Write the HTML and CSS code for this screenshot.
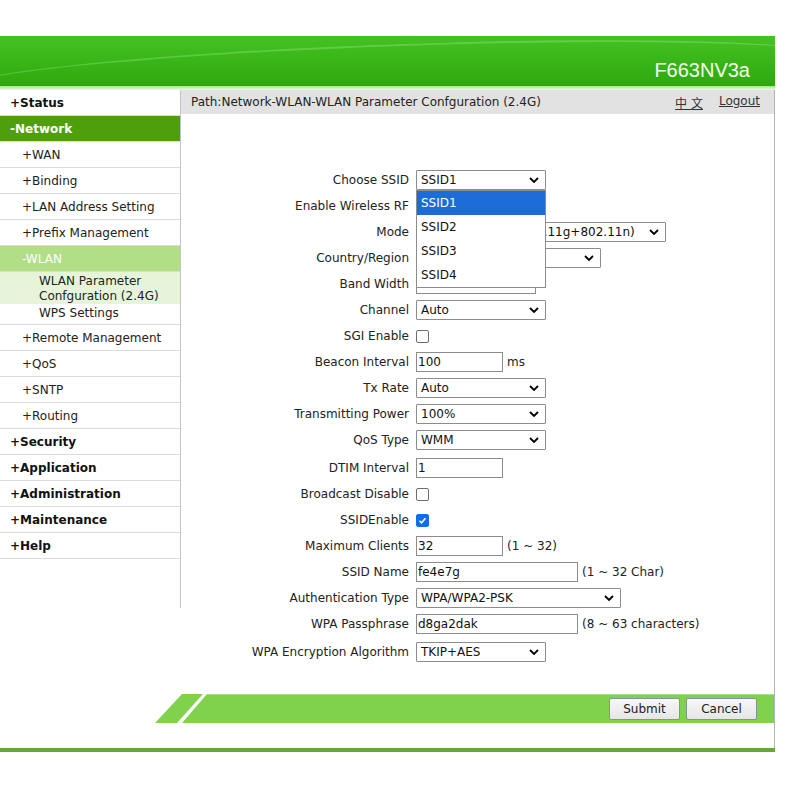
FILE: index.html
```html
<!DOCTYPE html>
<html>
<head>
<meta charset="utf-8">
<link rel="stylesheet" href="styles.css">
</head>
<body>
<div class="top"></div>
<header class="banner">
  <div class="swoosh"></div>
  <div class="model">F663NV3a</div>
</header>
<div class="banner-line"></div>
<div class="main">
  <nav class="side">
    <div class="item top-level">+Status</div>
    <div class="item top-level open">-Network</div>
    <div class="item sub">+WAN</div>
    <div class="item sub">+Binding</div>
    <div class="item sub">+LAN Address Setting</div>
    <div class="item sub">+Prefix Management</div>
    <div class="item sub active">-WLAN</div>
    <div class="subgroup">
      <div class="leaf current">WLAN Parameter<br>Confguration (2.4G)</div>
      <div class="leaf">WPS Settings</div>
    </div>
    <div class="item sub">+Remote Management</div>
    <div class="item sub">+QoS</div>
    <div class="item sub">+SNTP</div>
    <div class="item sub">+Routing</div>
    <div class="item top-level">+Security</div>
    <div class="item top-level">+Application</div>
    <div class="item top-level">+Administration</div>
    <div class="item top-level">+Maintenance</div>
    <div class="item top-level">+Help</div>
  </nav>
  <section class="content">
    <div class="path">
      <span class="path-text">Path:Network-WLAN-WLAN Parameter Confguration (2.4G)</span>
      <span class="links"><a class="lnk">中 文</a><a class="lnk">Logout</a></span>
    </div>
    <div class="form">
      <div class="row">
        <label class="lbl">Choose SSID</label>
        <div class="ctl">
          <div class="sel w130"><span>SSID1</span><svg class="chev" viewBox="0 0 10 6"><path d="M1 1 L5 5 L9 1" fill="none" stroke="#000" stroke-width="1.8"/></svg></div>
          <div class="dropdown">
            <div class="opt hl">SSID1</div>
            <div class="opt">SSID2</div>
            <div class="opt">SSID3</div>
            <div class="opt">SSID4</div>
          </div>
        </div>
      </div>
      <div class="row">
        <label class="lbl">Enable Wireless RF</label>
        <div class="ctl"><span class="cb"></span></div>
      </div>
      <div class="row">
        <label class="lbl">Mode</label>
        <div class="ctl"><div class="sel w250"><span>Mixed(802.11b+802.11g+802.11n)</span><svg class="chev" viewBox="0 0 10 6"><path d="M1 1 L5 5 L9 1" fill="none" stroke="#000" stroke-width="1.8"/></svg></div></div>
      </div>
      <div class="row">
        <label class="lbl">Country/Region</label>
        <div class="ctl"><div class="sel w185"><span>China</span><svg class="chev" viewBox="0 0 10 6"><path d="M1 1 L5 5 L9 1" fill="none" stroke="#000" stroke-width="1.8"/></svg></div></div>
      </div>
      <div class="row">
        <label class="lbl">Band Width</label>
        <div class="ctl"><div class="inp w120">20MHz</div></div>
      </div>
      <div class="row">
        <label class="lbl">Channel</label>
        <div class="ctl"><div class="sel w130"><span>Auto</span><svg class="chev" viewBox="0 0 10 6"><path d="M1 1 L5 5 L9 1" fill="none" stroke="#000" stroke-width="1.8"/></svg></div></div>
      </div>
      <div class="row">
        <label class="lbl">SGI Enable</label>
        <div class="ctl"><span class="cb"></span></div>
      </div>
      <div class="row">
        <label class="lbl">Beacon Interval</label>
        <div class="ctl"><div class="inp w87">100</div><span class="hint">ms</span></div>
      </div>
      <div class="row">
        <label class="lbl">Tx Rate</label>
        <div class="ctl"><div class="sel w130"><span>Auto</span><svg class="chev" viewBox="0 0 10 6"><path d="M1 1 L5 5 L9 1" fill="none" stroke="#000" stroke-width="1.8"/></svg></div></div>
      </div>
      <div class="row">
        <label class="lbl">Transmitting Power</label>
        <div class="ctl"><div class="sel w130"><span>100%</span><svg class="chev" viewBox="0 0 10 6"><path d="M1 1 L5 5 L9 1" fill="none" stroke="#000" stroke-width="1.8"/></svg></div></div>
      </div>
      <div class="row">
        <label class="lbl">QoS Type</label>
        <div class="ctl"><div class="sel w130"><span>WMM</span><svg class="chev" viewBox="0 0 10 6"><path d="M1 1 L5 5 L9 1" fill="none" stroke="#000" stroke-width="1.8"/></svg></div></div>
      </div>
      <div class="row tall">
        <label class="lbl">DTIM Interval</label>
        <div class="ctl"><div class="inp w87">1</div></div>
      </div>
      <div class="row">
        <label class="lbl">Broadcast Disable</label>
        <div class="ctl"><span class="cb"></span></div>
      </div>
      <div class="row">
        <label class="lbl">SSIDEnable</label>
        <div class="ctl"><span class="cb on"><svg viewBox="0 0 13 13"><path d="M3 6.8 L5.4 9.2 L10 3.8" fill="none" stroke="#fff" stroke-width="1.8"/></svg></span></div>
      </div>
      <div class="row">
        <label class="lbl">Maximum Clients</label>
        <div class="ctl"><div class="inp w87">32</div><span class="hint">(1 ~ 32)</span></div>
      </div>
      <div class="row">
        <label class="lbl">SSID Name</label>
        <div class="ctl"><div class="inp w162">fe4e7g</div><span class="hint">(1 ~ 32 Char)</span></div>
      </div>
      <div class="row">
        <label class="lbl">Authentication Type</label>
        <div class="ctl"><div class="sel w205"><span>WPA/WPA2-PSK</span><svg class="chev" viewBox="0 0 10 6"><path d="M1 1 L5 5 L9 1" fill="none" stroke="#000" stroke-width="1.8"/></svg></div></div>
      </div>
      <div class="row">
        <label class="lbl">WPA Passphrase</label>
        <div class="ctl"><div class="inp w162">d8ga2dak</div><span class="hint">(8 ~ 63 characters)</span></div>
      </div>
      <div class="row tall">
        <label class="lbl">WPA Encryption Algorithm</label>
        <div class="ctl"><div class="sel w130"><span>TKIP+AES</span><svg class="chev" viewBox="0 0 10 6"><path d="M1 1 L5 5 L9 1" fill="none" stroke="#000" stroke-width="1.8"/></svg></div></div>
      </div>
    </div>
    <div class="foot">
      <div class="piece"></div>
      <div class="bar">
        <button class="btn">Submit</button>
        <button class="btn">Cancel</button>
      </div>
    </div>
  </section>
</div>
<div class="bottom-line"></div>
</body>
</html>
```
FILE: styles.css
```css
html, body {
  margin: 0;
  padding: 0;
  background: #fff;
}
body {
  font-family: "DejaVu Sans", Verdana, sans-serif;
  font-size: 12px;
  color: #111;
  width: 788px;
}
.top {
  height: 36px;
}
.banner {
  position: relative;
  width: 775px;
  height: 50px;
  background: linear-gradient(180deg, #44c224 0%, #3bb81a 40%, #33ae12 80%, #2fa60e 100%);
  overflow: hidden;
}
.swoosh {
  position: absolute;
  left: -50px;
  top: 8px;
  width: 900px;
  height: 60px;
  border-radius: 50%;
  border-top: 2px solid rgba(200, 255, 170, 0.25);
  transform: rotate(-2deg);
}
.model {
  position: absolute;
  right: 25px;
  top: 23px;
  font-family: "Liberation Sans", Arial, sans-serif;
  font-size: 20px;
  color: #f4fff0;
}
.banner-line {
  width: 775px;
  height: 4px;
  background: linear-gradient(180deg, #a6e686, #eef9e8);
}
.main {
  display: flex;
  width: 775px;
  height: 658px;
}
.side {
  width: 180px;
  height: 518px;
  border-right: 1px solid #c4c4c4;
  flex-shrink: 0;
}
.item {
  height: 25px;
  line-height: 26px;
  border-bottom: 1px solid #dcdcdc;
  white-space: nowrap;
}
.top-level {
  font-weight: bold;
  padding-left: 10px;
  color: #111;
}
.top-level.open {
  background: #4f9f0d;
  color: #fff;
}
.sub {
  padding-left: 22px;
  color: #222;
}
.sub.active {
  background: #b1de87;
  color: #fff;
}
.subgroup {
  border-bottom: 1px solid #dcdcdc;
}
.leaf {
  padding-left: 39px;
  color: #222;
  line-height: 15px;
  box-sizing: border-box;
}
.leaf.current {
  background: #e6f5da;
  padding-top: 2px;
  height: 32px;
}
.leaf:not(.current) {
  height: 20px;
  padding-top: 2px;
}
.content {
  flex: 1;
  border-right: 1px solid #b4b4b4;
  display: flex;
  flex-direction: column;
}
.path {
  height: 24px;
  background: #e2e2e2;
  display: flex;
  align-items: center;
  justify-content: space-between;
  padding-left: 10px;
  padding-right: 14px;
  color: #222;
}
.links {
  display: flex;
  gap: 16px;
}
.lnk {
  text-decoration: underline;
  color: #333;
  font-family: "DejaVu Sans", "Noto Sans CJK SC", sans-serif;
}
.form {
  margin-top: 53px;
  display: flex;
  flex-direction: column;
}
.row {
  display: flex;
  align-items: center;
  height: 26px;
}
.row.tall {
  height: 28px;
  padding-top: 2px;
  box-sizing: border-box;
}
.lbl {
  width: 228px;
  text-align: right;
  flex-shrink: 0;
  color: #222;
  white-space: nowrap;
}
.ctl {
  position: relative;
  margin-left: 7px;
  display: flex;
  align-items: center;
  gap: 5px;
}
.sel {
  height: 20px;
  box-sizing: border-box;
  border: 1px solid #8c8c8c;
  border-radius: 1px;
  background: #fff;
  display: flex;
  align-items: center;
  justify-content: space-between;
  padding-left: 4px;
  padding-right: 6px;
  white-space: nowrap;
  overflow: hidden;
  color: #111;
}
.chev {
  width: 10px;
  height: 6px;
  flex-shrink: 0;
}
.inp {
  height: 20px;
  box-sizing: border-box;
  border: 1px solid #8c8c8c;
  background: #fff;
  display: flex;
  align-items: center;
  padding-left: 1px;
  color: #111;
  white-space: nowrap;
}
.w87 { width: 87px; }
.w120 { width: 120px; }
.w130 { width: 130px; }
.w162 { width: 162px; }
.w185 { width: 185px; }
.w205 { width: 205px; }
.w250 { width: 250px; }
.hint {
  color: #222;
  margin-left: -1px;
}
.cb {
  display: inline-block;
  width: 13px;
  height: 13px;
  box-sizing: border-box;
  border: 1px solid #6e6e6e;
  border-radius: 2px;
  background: #fff;
}
.cb.on {
  background: #0f6fe8;
  border-color: #0f6fe8;
}
.cb.on svg {
  display: block;
  width: 11px;
  height: 11px;
}
.dropdown {
  position: absolute;
  left: 0;
  top: 20px;
  width: 130px;
  box-sizing: border-box;
  border: 1px solid #8c8c8c;
  background: #fff;
  z-index: 5;
}
.opt {
  height: 24px;
  line-height: 24px;
  padding-left: 4px;
  color: #111;
}
.opt.hl {
  background: #1d6bd6;
  color: #fff;
}
.foot {
  margin-top: auto;
  margin-bottom: 25px;
  margin-left: -26px;
  height: 29px;
  display: flex;
}
.piece {
  width: 48px;
  flex-shrink: 0;
  background: #80d24c;
  clip-path: polygon(27px 0, 48px 0, 22px 100%, 0 100%);
}
.bar {
  flex: 1;
  margin-left: -21px;
  background: #80d24c;
  box-shadow: inset 0 1px 0 #a9e383;
  clip-path: polygon(25px 0, 100% 0, 100% 100%, 0 100%);
  display: flex;
  justify-content: flex-end;
  align-items: center;
  gap: 6px;
  padding-right: 17px;
}
.btn {
  width: 71px;
  height: 22px;
  font-family: "DejaVu Sans", Verdana, sans-serif;
  font-size: 12px;
  color: #222;
  background: linear-gradient(180deg, #f7f7f7, #e6e6e6);
  border: 1px solid #8f8f8f;
  border-radius: 2px;
  padding: 0;
}
.bottom-line {
  width: 775px;
  height: 4px;
  background: #62a83a;
}
```
